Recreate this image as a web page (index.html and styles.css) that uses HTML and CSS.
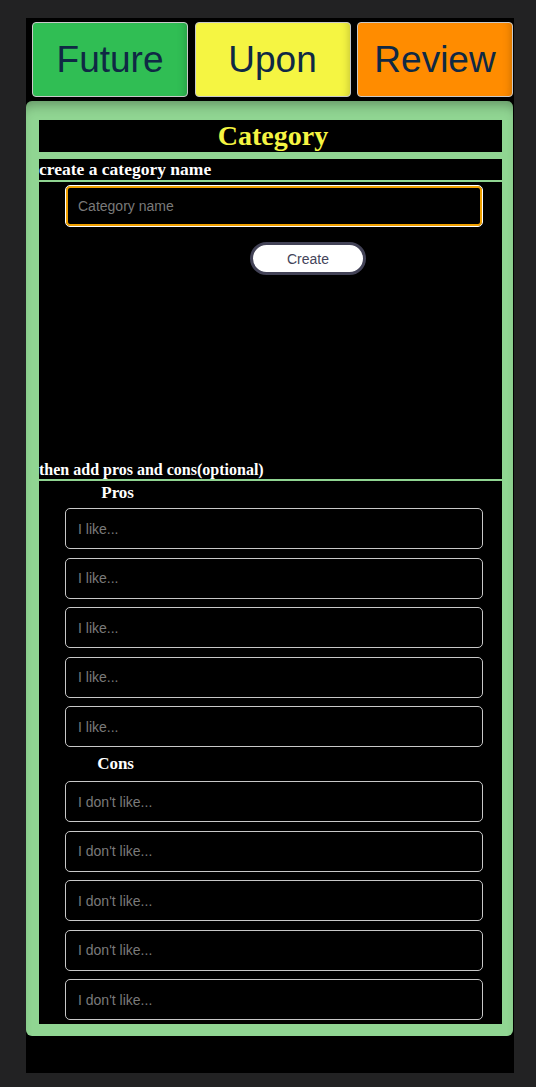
FILE: index.html
```
<!DOCTYPE html>
<html>
<head>
<meta charset="utf-8">
<link rel="stylesheet" href="styles.css">
</head>
<body>
<div class="app">
  <nav class="nav">
    <button class="tab tab-future">Future</button>
    <button class="tab tab-upon">Upon</button>
    <button class="tab tab-review">Review</button>
  </nav>
  <div class="panel">
    <div class="title-box"><h1 class="title">Category</h1></div>
    <div class="body-box">
      <h2 class="section-head">create a category name</h2>
      <div class="name-row">
        <input class="field field-focus" type="text" placeholder="Category name">
      </div>
      <div class="create-row"><button class="create-btn">Create</button></div>
      <h2 class="section-head section-head-2">then add pros and cons(optional)</h2>
      <div class="group-label">Pros</div>
      <div class="field-list">
        <input class="field" type="text" placeholder="I like...">
        <input class="field" type="text" placeholder="I like...">
        <input class="field" type="text" placeholder="I like...">
        <input class="field" type="text" placeholder="I like...">
        <input class="field" type="text" placeholder="I like...">
      </div>
      <div class="group-label group-label-cons">Cons</div>
      <div class="field-list">
        <input class="field" type="text" placeholder="I don't like...">
        <input class="field" type="text" placeholder="I don't like...">
        <input class="field" type="text" placeholder="I don't like...">
        <input class="field" type="text" placeholder="I don't like...">
        <input class="field" type="text" placeholder="I don't like...">
      </div>
    </div>
  </div>
</div>
</body>
</html>
```
FILE: styles.css
```
html, body {
  margin: 0;
  padding: 0;
  background: #222223;
}
body {
  padding: 18px 0 14px 26px;
}
.app {
  width: 488px;
  height: 1055px;
  background: #000;
  box-sizing: border-box;
}
.nav {
  display: flex;
  gap: 6.5px;
  padding: 4px 1px 0 6px;
}
.tab {
  width: 156px;
  height: 75px;
  border: 1px solid #c9c9c9;
  border-radius: 4px;
  font-family: "Liberation Sans", Arial, sans-serif;
  font-size: 37px;
  color: #0f2944;
  padding: 0;
  box-shadow: inset -8px 0 10px -8px rgba(0,0,0,0.25);
}
.tab-future { background: #30be54; }
.tab-upon { background: #f5f542; }
.tab-review { background: #ff8c00; }
.panel {
  margin-top: 4px;
  width: 487px;
  background: #90d592;
  border-radius: 6px;
  padding: 19px 11px 12px 13px;
  box-sizing: border-box;
  box-shadow: inset 0 10px 12px -6px rgba(0,0,0,0.3);
}
.title-box {
  background: #000;
  height: 32px;
  display: flex;
  align-items: center;
  justify-content: center;
  padding-left: 5px;
}
.title {
  margin: 0;
  font-family: "Liberation Serif", "Times New Roman", serif;
  font-weight: bold;
  font-size: 28px;
  line-height: 32px;
  color: #f5f542;
}
.body-box {
  margin-top: 7px;
  background: #000;
  padding-bottom: 4px;
}
.section-head {
  margin: 0;
  font-family: "Liberation Serif", "Times New Roman", serif;
  font-weight: bold;
  font-size: 17.5px;
  line-height: 21px;
  color: #fff;
  border-bottom: 2px solid #90d592;
}
.section-head-2 {
  margin-top: 185px;
  font-size: 16px;
  line-height: 19px;
}
.name-row {
  padding: 3px 0 0 26px;
}
.field {
  display: block;
  width: 418px;
  height: 41px;
  box-sizing: border-box;
  background: #000;
  border: 1px solid #c8c8c8;
  border-radius: 5px;
  padding: 0 0 0 12px;
  font-family: "Liberation Sans", Arial, sans-serif;
  font-size: 14px;
  color: #fff;
  outline: none;
}
.field::placeholder {
  color: #7a7a7a;
}
.field-focus {
  height: 42px;
  border: 1px solid #fff;
  box-shadow: inset 0 0 0 2px #f0a000;
}
.create-row {
  padding: 15px 0 0 211px;
}
.create-btn {
  width: 116px;
  height: 33px;
  background: #fff;
  border: 3px solid #434357;
  border-radius: 17px;
  font-family: "Liberation Sans", Arial, sans-serif;
  font-size: 14px;
  color: #44445a;
  padding: 0;
}
.group-label {
  width: 95px;
  text-align: right;
  font-family: "Liberation Serif", "Times New Roman", serif;
  font-weight: bold;
  font-size: 17px;
  line-height: 22px;
  color: #fff;
  margin: 1px 0 4px;
}
.group-label-cons {
  margin: 6px 0 6px;
}
.field-list {
  display: flex;
  flex-direction: column;
  gap: 8.5px;
  padding-left: 26px;
}
```
